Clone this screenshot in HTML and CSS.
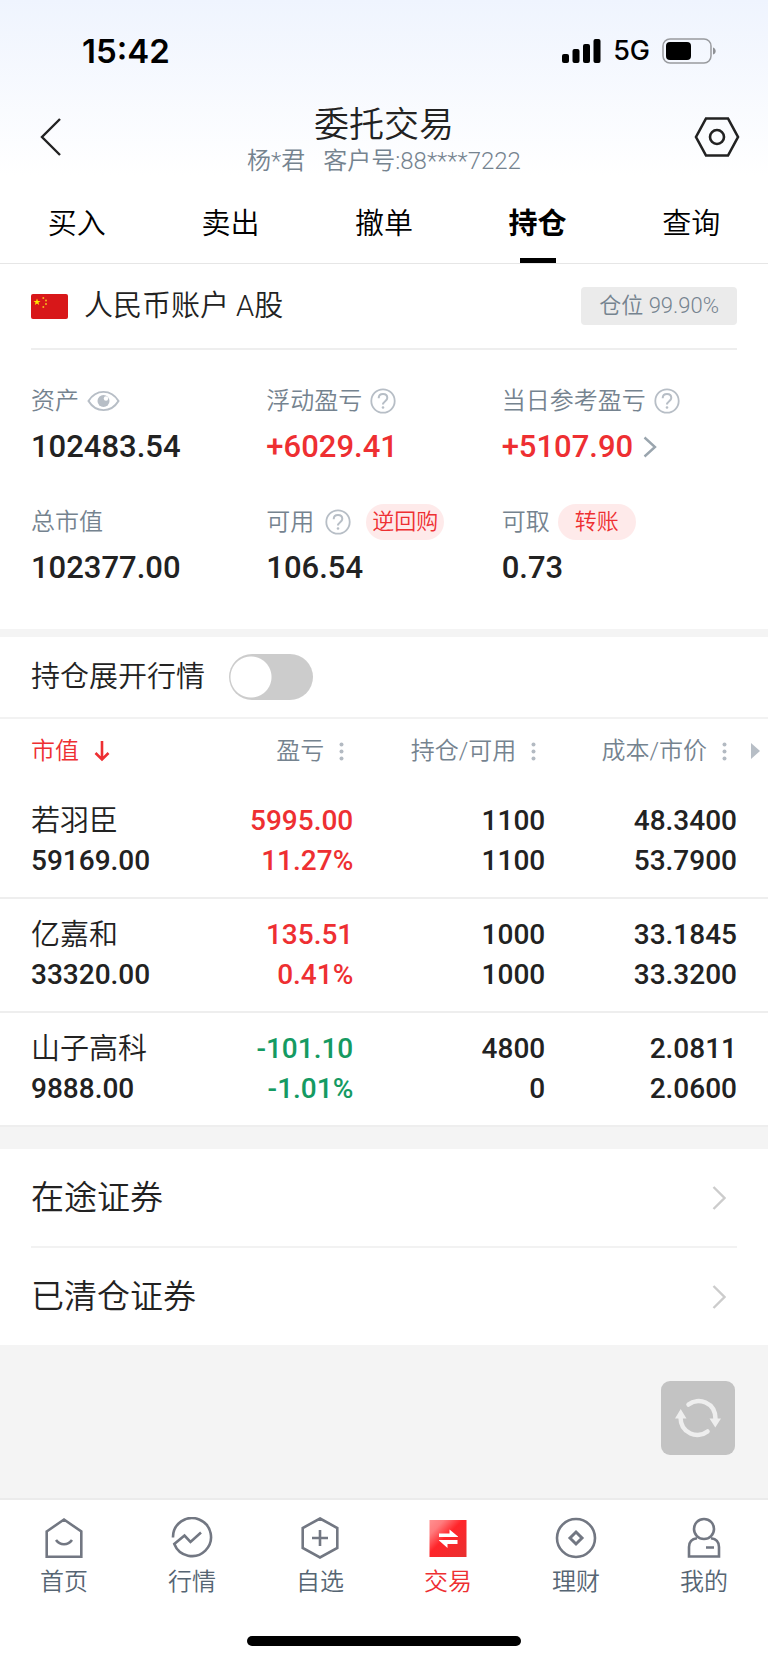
FILE: index.html
```html
<!DOCTYPE html>
<html lang="zh-CN">
<head>
<meta charset="utf-8">
<meta name="viewport" content="width=device-width, initial-scale=1">
<title>委托交易</title>
<link rel="stylesheet" href="styles.css">
</head>
<body>
<div class="page">
  <div class="top">
    <div class="status">
      <span class="time">15:42</span>
      <div class="signals">
        <svg width="39" height="24" viewBox="0 0 39 24" aria-hidden="true"><rect x="0" y="15" width="7" height="9" rx="2"/><rect x="10.500" y="10" width="7" height="14" rx="2"/><rect x="21" y="5" width="7" height="19" rx="2"/><rect x="31.500" y="0" width="7" height="24" rx="2"/></svg>
        <span class="network">5G</span>
        <svg width="55" height="26" viewBox="0 0 55 26" aria-hidden="true"><rect x="1" y="1" width="48" height="24" rx="7" fill="none" stroke="#999b9f" stroke-width="1.500"/><rect x="4" y="4" width="25" height="18" rx="4"/><path d="M51 9.500c3.600 1.200 3.600 6 0 7z" fill="#8f9195"/></svg>
      </div>
    </div>
    <header class="header">
      <button class="icon-btn" type="button" aria-label="返回"><svg width="24" height="40" viewBox="0 0 24 40"><path d="M21 2 3 20l18 18" fill="none" stroke="#222" stroke-width="2.400"/></svg></button>
      <div class="heading">
        <h1 class="title">委托交易</h1>
        <p class="client"><span>杨*君</span><span>客户号:88****7222</span></p>
      </div>
      <button class="icon-btn end" type="button" aria-label="设置"><svg width="46" height="42" viewBox="0 0 46 42"><path d="M12 2.500h22L44 21 34 39.500H12L2 21z" fill="none" stroke="#222" stroke-width="2.600"/><circle cx="23" cy="21" r="7" fill="none" stroke="#222" stroke-width="2.600"/></svg></button>
    </header>
    <nav class="tabs" aria-label="交易">
      <a class="tab" href="#buy">买入</a>
      <a class="tab" href="#sell">卖出</a>
      <a class="tab" href="#cancel">撤单</a>
      <a class="tab active" href="#hold" aria-current="page">持仓</a>
      <a class="tab" href="#query">查询</a>
    </nav>
  </div>

  <main class="main">
    <section class="card">
      <div class="account">
        <svg width="37" height="25" viewBox="0 0 37 25" aria-hidden="true"><rect width="37" height="25" rx="2" fill="#d81719"/><path d="M6 4.500l.900 2.500h2.600L7.400 8.600l.800 2.500L6 9.600l-2.200 1.500.800-2.500L2.500 7h2.600z" fill="#ffe600"/><g fill="#f7b51c"><circle cx="12.300" cy="4" r="1"/><circle cx="15" cy="6.500" r="1"/><circle cx="15" cy="10" r="1"/><circle cx="12.300" cy="13" r="1"/></g></svg>
        <h2 class="account-name">人民币账户 A股</h2>
        <span class="ratio">仓位 99.90%</span>
      </div>
      <div class="metrics">
        <div class="metric">
          <div class="label">资产<button class="plain" type="button" aria-label="隐藏资产"><svg width="33" height="24" viewBox="0 0 33 24"><path d="M1.500 12C9-1.500 24-1.500 31.500 12 24 25.500 9 25.500 1.500 12z" transform="translate(0 1.200) scale(1 .9)" fill="none" stroke="#b7bec6" stroke-width="2"/><circle cx="16.500" cy="12" r="6" fill="#b7bec6"/><circle cx="19" cy="9.500" r="2.200" fill="#fff"/></svg></button></div>
          <div class="value">102483.54</div>
        </div>
        <div class="metric">
          <div class="label">浮动盈亏<button class="plain" type="button" aria-label="浮动盈亏说明"><svg width="26" height="26" viewBox="0 0 26 26"><use href="#help"/></svg></button></div>
          <div class="value up">+6029.41</div>
        </div>
        <div class="metric">
          <div class="label">当日参考盈亏<button class="plain" type="button" aria-label="当日参考盈亏说明"><svg width="26" height="26" viewBox="0 0 26 26"><use href="#help"/></svg></button></div>
          <a class="value up" href="#today">+5107.90<svg width="14" height="22" viewBox="0 0 14 22" aria-hidden="true"><path d="M1.500 1.500 12 11 1.500 20.500" fill="none" stroke="#9aa5ae" stroke-width="2.400"/></svg></a>
        </div>
        <div class="metric">
          <div class="label">总市值</div>
          <div class="value">102377.00</div>
        </div>
        <div class="metric">
          <div class="label">可用<button class="plain spaced" type="button" aria-label="可用说明"><svg width="26" height="26" viewBox="0 0 26 26"><g id="help" fill="none" stroke="#b7bec6" stroke-width="1.800"><circle cx="13" cy="13" r="11.700"/><path d="M8.700 10.300c0-2.500 1.800-4.200 4.300-4.200s4.300 1.600 4.300 3.900c0 3-4.300 3.400-4.300 6.500" stroke-width="2"/><circle cx="13" cy="19.500" r="1.300" fill="#b7bec6" stroke="none"/></g></svg></button><button class="pill narrow" type="button">逆回购</button></div>
          <div class="value">106.54</div>
        </div>
        <div class="metric">
          <div class="label">可取<button class="pill" type="button">转账</button></div>
          <div class="value">0.73</div>
        </div>
      </div>
    </section>

    <section class="card holdings">
      <div class="expand">
        <label for="expand">持仓展开行情</label>
        <input class="switch" id="expand" type="checkbox" role="switch">
      </div>
      <table class="table">
        <thead>
          <tr>
            <th scope="col"><button class="sort active" type="button">市值<svg width="16" height="22" viewBox="0 0 16 22" aria-hidden="true"><path d="M8 1v18M1.500 13 8 19.500 14.500 13" fill="none" stroke="#ee2f32" stroke-width="2.600"/></svg></button></th>
            <th scope="col"><button class="sort" type="button">盈亏<svg width="5" height="20" viewBox="0 0 5 20" aria-hidden="true"><g id="dots" fill="#b3bac2"><circle cx="2.500" cy="3.500" r="2"/><circle cx="2.500" cy="10.500" r="2"/><circle cx="2.500" cy="17.500" r="2"/></g></svg></button></th>
            <th scope="col"><button class="sort" type="button">持仓/可用<svg width="5" height="20" viewBox="0 0 5 20" aria-hidden="true"><use href="#dots"/></svg></button></th>
            <th scope="col"><div class="last"><button class="sort" type="button">成本/市价<svg width="5" height="20" viewBox="0 0 5 20" aria-hidden="true"><use href="#dots"/></svg></button><svg width="9" height="18" viewBox="0 0 9 18" aria-hidden="true"><path d="M0 1 9 9 0 17z" fill="#b7bec6"/></svg></div></th>
          </tr>
        </thead>
        <tbody>
          <tr>
            <td><div class="stock">若羽臣</div><div>59169.00</div></td>
            <td class="up"><div>5995.00</div><div>11.27%</div></td>
            <td><div>1100</div><div>1100</div></td>
            <td><div>48.3400</div><div>53.7900</div></td>
          </tr>
          <tr>
            <td><div class="stock">亿嘉和</div><div>33320.00</div></td>
            <td class="up"><div>135.51</div><div>0.41%</div></td>
            <td><div>1000</div><div>1000</div></td>
            <td><div>33.1845</div><div>33.3200</div></td>
          </tr>
          <tr>
            <td><div class="stock">山子高科</div><div>9888.00</div></td>
            <td class="down"><div>-101.10</div><div>-1.01%</div></td>
            <td><div>4800</div><div>0</div></td>
            <td><div>2.0811</div><div>2.0600</div></td>
          </tr>
        </tbody>
      </table>
    </section>

    <section class="card links">
      <a class="link" href="#transit">在途证券<svg width="14" height="26" viewBox="0 0 14 26" aria-hidden="true"><path d="M1.500 2 12.500 13 1.500 24" fill="none" stroke="#ccc" stroke-width="2.400"/></svg></a>
      <a class="link" href="#cleared">已清仓证券<svg width="14" height="26" viewBox="0 0 14 26" aria-hidden="true"><path d="M1.500 2 12.500 13 1.500 24" fill="none" stroke="#ccc" stroke-width="2.400"/></svg></a>
    </section>

    <div class="float">
      <button class="refresh" type="button" aria-label="刷新"><svg width="46" height="40" viewBox="0 0 46 40"><g fill="none" stroke="#eee" stroke-width="4.500" stroke-linecap="round"><path d="M13.500 6.500C23-1 40.500 4 40.500 21"/><path d="M32.500 33.500C23 41 5.500 36 5.500 19"/></g><path d="M34.500 20.500h11.500L40.300 29.500zM0 20.500h11.500L5.700 11z" fill="#eee"/></svg></button>
    </div>
  </main>

  <footer class="footer">
    <nav class="dock" aria-label="主导航">
      <a class="dock-item" href="#home"><svg width="42" height="42" viewBox="0 0 42 42" aria-hidden="true"><path d="M3.700 14.500 21 2.500l17.300 12v25.300H3.700z"/><path d="M13 23c4 5.600 12 5.600 16 0"/></svg>首页</a>
      <a class="dock-item" href="#market"><svg width="42" height="42" viewBox="0 0 42 42" aria-hidden="true"><path d="M2 20.500A19 19 0 1 1 3.300 27L13.500 18.500l6 6.500L30 15.500"/></svg>行情</a>
      <a class="dock-item" href="#watch"><svg width="42" height="42" viewBox="0 0 42 42" aria-hidden="true"><path d="M21 1.500 38.300 11v20L21 40.500 3.700 31V11zM21 13v16M13 21h16"/></svg>自选</a>
      <a class="dock-item active" href="#trade" aria-current="page"><svg width="42" height="42" viewBox="0 0 42 42" aria-hidden="true"><defs><linearGradient id="red" x1="0" y1="0" x2="1" y2="1"><stop offset="0" stop-color="#ff9090"/><stop offset=".2" stop-color="#ff7b7d"/><stop offset=".45" stop-color="#ff252a"/><stop offset="1" stop-color="#e83030"/></linearGradient></defs><rect x="2.500" y="3" width="37" height="37" fill="url(#red)" stroke="none"/><path d="M12 16.500h10.500v-4L31 19.500v.500H12zM30.500 23v4H20.500v4L12 23.500V23z" fill="#fff" stroke="none"/></svg>交易</a>
      <a class="dock-item" href="#wealth"><svg width="42" height="42" viewBox="0 0 42 42" aria-hidden="true"><circle cx="21" cy="21" r="19"/><path d="M21 15l6 6-6 6-6-6z" stroke-width="3"/></svg>理财</a>
      <a class="dock-item" href="#me"><svg width="42" height="42" viewBox="0 0 42 42" aria-hidden="true"><circle cx="21" cy="12" r="10"/><path d="M14 21.300C9 22 6 25 6 30v9.500h30V30c0-5-3-8-8-8.700M23 30.500h8"/></svg>我的</a>
    </nav>
    <div class="home-bar"></div>
  </footer>
</div>
</body>
</html>
```
FILE: styles.css
```css
* { box-sizing: border-box; }

body {
  margin: 0;
  background: #f4f4f4;
  color: #222;
  font-family: Roboto, "Noto Sans CJK SC", sans-serif;
  font-size: 24px;
  font-weight: 350;
  line-height: 36px;
}

h1, h2, p { margin: 0; font-weight: inherit; }

a { color: inherit; text-decoration: none; }

button {
  padding: 0;
  border: 0;
  background: none;
  color: inherit;
  font: inherit;
}

svg { display: block; flex: none; }

.page {
  display: flex;
  flex-direction: column;
  min-height: 100vh;
}

.top { background: linear-gradient(#eff4fe, #fff 176px); }

.status {
  display: flex;
  align-items: center;
  justify-content: space-between;
  height: 102px;
  padding: 0 51px 0 82px;
  color: #000;
  font-family: Inter, sans-serif;
}

.time { font-size: 33px; font-weight: 600; }

.signals { display: flex; align-items: center; gap: 12px; }

.network { font-size: 27px; font-weight: 500; }

.header {
  display: grid;
  grid-template-columns: 1fr auto 1fr;
  align-items: center;
  padding: 0 28px 13px;
}

.heading { text-align: center; }

.icon-btn { justify-self: start; padding-left: 11px; }

.icon-btn.end { justify-self: end; padding-left: 0; }

.title { font-size: 35px; line-height: 48px; }

.client {
  display: flex;
  gap: 18px;
  color: #75838f;
  line-height: 22px;
}

.tabs {
  display: flex;
  border-bottom: 1px solid #e6e6e6;
  color: #000;
  font-size: 29px;
}

.tab {
  display: flex;
  flex: 1;
  flex-direction: column;
  align-items: center;
  line-height: 78px;
}

.tab.active { position: relative; font-weight: 700; }

.tab.active::after {
  position: absolute;
  bottom: 0;
  width: 36px;
  height: 5px;
  background: #000;
  content: "";
}

.main { flex: 1; }

.card { background: #fff; }

.account {
  display: flex;
  align-items: center;
  gap: 16px;
  height: 86px;
  margin: 0 31px;
  border-bottom: 2px solid #eee;
}

.account-name { flex: 1; font-size: 29px; }

.ratio {
  padding: 0 18px;
  border-radius: 4px;
  background: #ebebeb;
  color: #75838f;
  font-size: 22px;
  line-height: 38px;
}

.metrics {
  display: grid;
  grid-template-columns: repeat(3, 1fr);
  row-gap: 29px;
  padding: 32px 31px 34px;
}

.label {
  display: flex;
  align-items: center;
  gap: 8px;
  height: 38px;
  color: #75838f;
  white-space: nowrap;
}

.spaced { margin: 0 7px 0 3px; }

.pill {
  padding: 0 17px;
  border-radius: 18px;
  background: #feeaea;
  color: #ee2f32;
  font-size: 22px;
  line-height: 36px;
}

.pill.narrow { padding: 0 6px; }

.value {
  display: flex;
  align-items: center;
  gap: 10px;
  font-size: 31px;
  font-weight: 500;
  line-height: 54px;
}

.up { color: #ee2f32; }

.down { color: #159a62; }

.holdings { margin-top: 8px; }

.expand {
  display: flex;
  align-items: center;
  gap: 24px;
  height: 82px;
  padding: 0 31px;
  border-bottom: 2px solid #f2f2f2;
  font-size: 29px;
}

.switch {
  width: 84px;
  height: 46px;
  margin: 0;
  border-radius: 23px;
  background: radial-gradient(circle at 22px 23px, #fff 20px, #ccc 21px);
  appearance: none;
}

.switch:checked { background: radial-gradient(circle at 62px 23px, #fff 20px, #ee2f32 21px); }

.table {
  width: 100%;
  border-collapse: collapse;
  table-layout: fixed;
  text-align: right;
}

.table th {
  height: 66px;
  padding: 0 9px 2px 0;
  color: #75838f;
  font-weight: inherit;
}

.table th:nth-child(1) { width: 21%; padding-left: 31px; }
.table th:nth-child(2), .table th:nth-child(3) { width: 25%; }
.table th:nth-child(4) { width: 29%; padding-right: 8px; }

.sort { display: flex; align-items: center; gap: 15px; margin-left: auto; white-space: nowrap; }

.sort.active { margin-left: 0; color: #ee2f32; }

.last { display: flex; align-items: center; gap: 24px; }

.table td {
  padding: 16px 0;
  border-bottom: 2px solid #eee;
  font-size: 28px;
  font-weight: 500;
  line-height: 40px;
  white-space: nowrap;
}

.table td:first-child { padding-left: 31px; text-align: left; }

.table td:last-child { padding-right: 31px; }

.table .stock { font-size: 29px; font-weight: 350; }

.links { margin-top: 22px; padding: 0 31px; }

.link {
  display: flex;
  align-items: center;
  justify-content: space-between;
  padding-right: 11px;
  font-size: 33px;
  line-height: 97px;
}

.link + .link { border-top: 2px solid #f2f2f2; }

.float { display: flex; justify-content: flex-end; padding: 36px 33px; }

.refresh {
  display: grid;
  place-items: center;
  width: 74px;
  height: 74px;
  border-radius: 9px;
  background: #c3c3c3;
}

.footer {
  padding-bottom: 17px;
  border-top: 2px solid #ebebeb;
  background: #fff;
}

.dock { display: flex; padding-top: 17px; }

.dock-item {
  display: flex;
  flex: 1;
  flex-direction: column;
  align-items: center;
  gap: 5px;
  color: #566573;
  line-height: 36px;
}

.dock-item svg { fill: none; stroke: #727782; stroke-width: 2.6px; }

.dock-item.active { color: #ee2f32; }

.home-bar {
  width: 274px;
  height: 10px;
  margin: 36px auto 0;
  border-radius: 5px;
  background: #000;
}
```
